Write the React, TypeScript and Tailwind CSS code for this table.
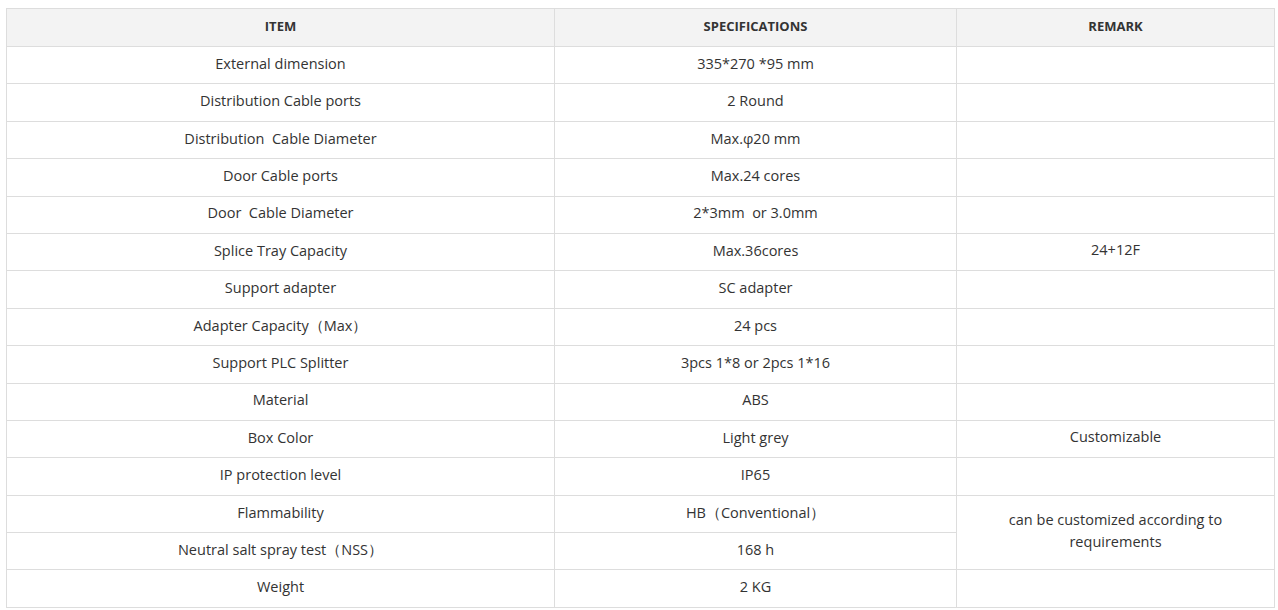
const ROWS: { item: string; spec: string }[] = [
  { item: 'External dimension', spec: '335*270 *95 mm' },
  { item: 'Distribution Cable ports', spec: '2 Round' },
  { item: 'Distribution  Cable Diameter', spec: 'Max.φ20 mm' },
  { item: 'Door Cable ports', spec: 'Max.24 cores' },
  { item: 'Door  Cable Diameter', spec: '2*3mm  or 3.0mm' },
  { item: 'Splice Tray Capacity', spec: 'Max.36cores' },
  { item: 'Support adapter', spec: 'SC adapter' },
  { item: 'Adapter Capacity（Max）', spec: '24 pcs' },
  { item: 'Support PLC Splitter', spec: '3pcs 1*8 or 2pcs 1*16' },
  { item: 'Material', spec: 'ABS' },
  { item: 'Box Color', spec: 'Light grey' },
  { item: 'IP protection level', spec: 'IP65' },
  { item: 'Flammability', spec: 'HB（Conventional）' },
  { item: 'Neutral salt spray test（NSS）', spec: '168 h' },
  { item: 'Weight', spec: '2 KG' },
]

// remark cells: index -> [text, rowSpan]; row 13 is covered by the rowSpan above it
const REMARKS: Record<number, [string, number]> = {
  5: ['24+12F', 1],
  10: ['Customizable', 1],
  12: ['can be customized according to requirements', 2],
}

const cell = 'border border-[#dddddd] text-center align-middle px-2 pb-[3px] whitespace-pre'
const head = 'border border-[#dddddd] text-center align-middle px-2 pb-[1px] text-[13px] font-bold'

export default function App() {
  return (
    <div className="bg-white min-h-screen pt-2 pl-[6px] text-[#333333] font-['Open_Sans',sans-serif]">
      <table className="border-collapse table-fixed w-[1268px] text-[14.5px]">
        <colgroup>
          <col className="w-[548px]" />
          <col className="w-[402px]" />
          <col className="w-[318px]" />
        </colgroup>
        <thead>
          <tr className="h-[38px] bg-[#f3f3f3]">
            <th className={head}>ITEM</th>
            <th className={head}>SPECIFICATIONS</th>
            <th className={head}>REMARK</th>
          </tr>
        </thead>
        <tbody>
          {ROWS.map((r, i) => {
            const covered = i === 13
            const remark = REMARKS[i]
            return (
              <tr key={i} className="h-[37.4px]">
                <td className={cell}>{r.item}</td>
                <td className={cell}>{r.spec}</td>
                {!covered && (
                  <td
                    rowSpan={remark ? remark[1] : 1}
                    className="border border-[#dddddd] text-center align-middle px-10 pb-[4px] leading-[22px]"
                  >
                    {remark ? remark[0] : ''}
                  </td>
                )}
              </tr>
            )
          })}
        </tbody>
      </table>
    </div>
  )
}
